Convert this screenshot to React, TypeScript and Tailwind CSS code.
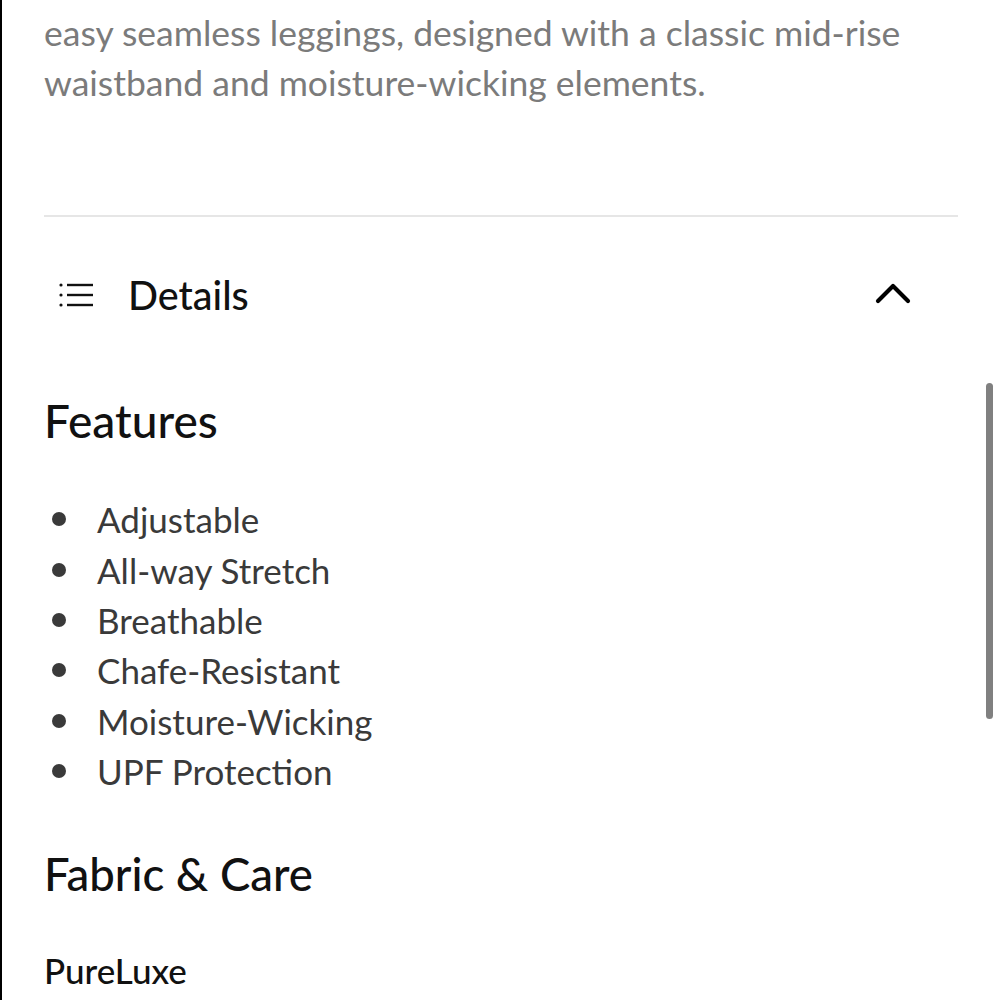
const features = [
  "Adjustable",
  "All-way Stretch",
  "Breathable",
  "Chafe-Resistant",
  "Moisture-Wicking",
  "UPF Protection",
];

function ListIcon() {
  return (
    <svg width="36" height="26" viewBox="0 0 36 26" fill="none" stroke="#111" strokeWidth="2.4">
      <circle cx="3" cy="3" r="1.6" fill="#111" stroke="none" />
      <circle cx="3" cy="13" r="1.6" fill="#111" stroke="none" />
      <circle cx="3" cy="23" r="1.6" fill="#111" stroke="none" />
      <line x1="9" y1="3" x2="35" y2="3" />
      <line x1="9" y1="13" x2="35" y2="13" />
      <line x1="9" y1="23" x2="35" y2="23" />
    </svg>
  );
}

function Chevron() {
  return (
    <svg width="36" height="24" viewBox="0 0 36 24" fill="none" stroke="#000" strokeWidth="4.2" strokeLinecap="round" strokeLinejoin="round">
      <polyline points="3,20 18,5 33,20" />
    </svg>
  );
}

export default function App() {
  return (
    <div className="relative h-[1000px] w-[1000px] overflow-hidden border-l-2 border-black bg-white font-['Lato',sans-serif]">
      <div className="pl-[42px] pr-[42px]">
        <p className="pt-[8px] text-[35.5px] leading-[50px] text-[#7b7b7b]">
          easy seamless leggings, designed with a classic mid-rise waistband and moisture-wicking elements.
        </p>

        <div className="mt-[107px] h-[2px] bg-[#e6e6e6]" />

        <button className="mt-[56px] flex h-[44px] w-full items-center justify-between">
          <span className="flex items-center gap-[34px] pl-[14px]">
            <ListIcon />
            <span className="text-[39.5px] font-medium leading-[44px] text-[#111]">Details</span>
          </span>
          <span className="mr-[47px] mb-[4px]">
            <Chevron />
          </span>
        </button>

        <h2 className="mt-[79px] text-[46px] font-medium leading-[50px] text-[#111]">Features</h2>

        <ul className="mt-[48px]">
          {features.map((f) => (
            <li key={f} className="flex h-[50.4px] items-center gap-[31px] pl-[8px]">
              <span className="h-[14px] w-[14px] rounded-full bg-[#3a3a3a]" />
              <span className="text-[35px] leading-[50px] text-[#3a3a3a]">{f}</span>
            </li>
          ))}
        </ul>

        <h2 className="mt-[52px] text-[45.5px] font-medium leading-[52px] text-[#111]">Fabric &amp; Care</h2>

        <h3 className="mt-[50px] text-[35px] font-medium leading-[40px] text-[#111]">PureLuxe</h3>
      </div>

      <div className="absolute left-[984px] top-[383px] h-[336px] w-[7px] rounded-full bg-[#808080]" />
    </div>
  );
}
